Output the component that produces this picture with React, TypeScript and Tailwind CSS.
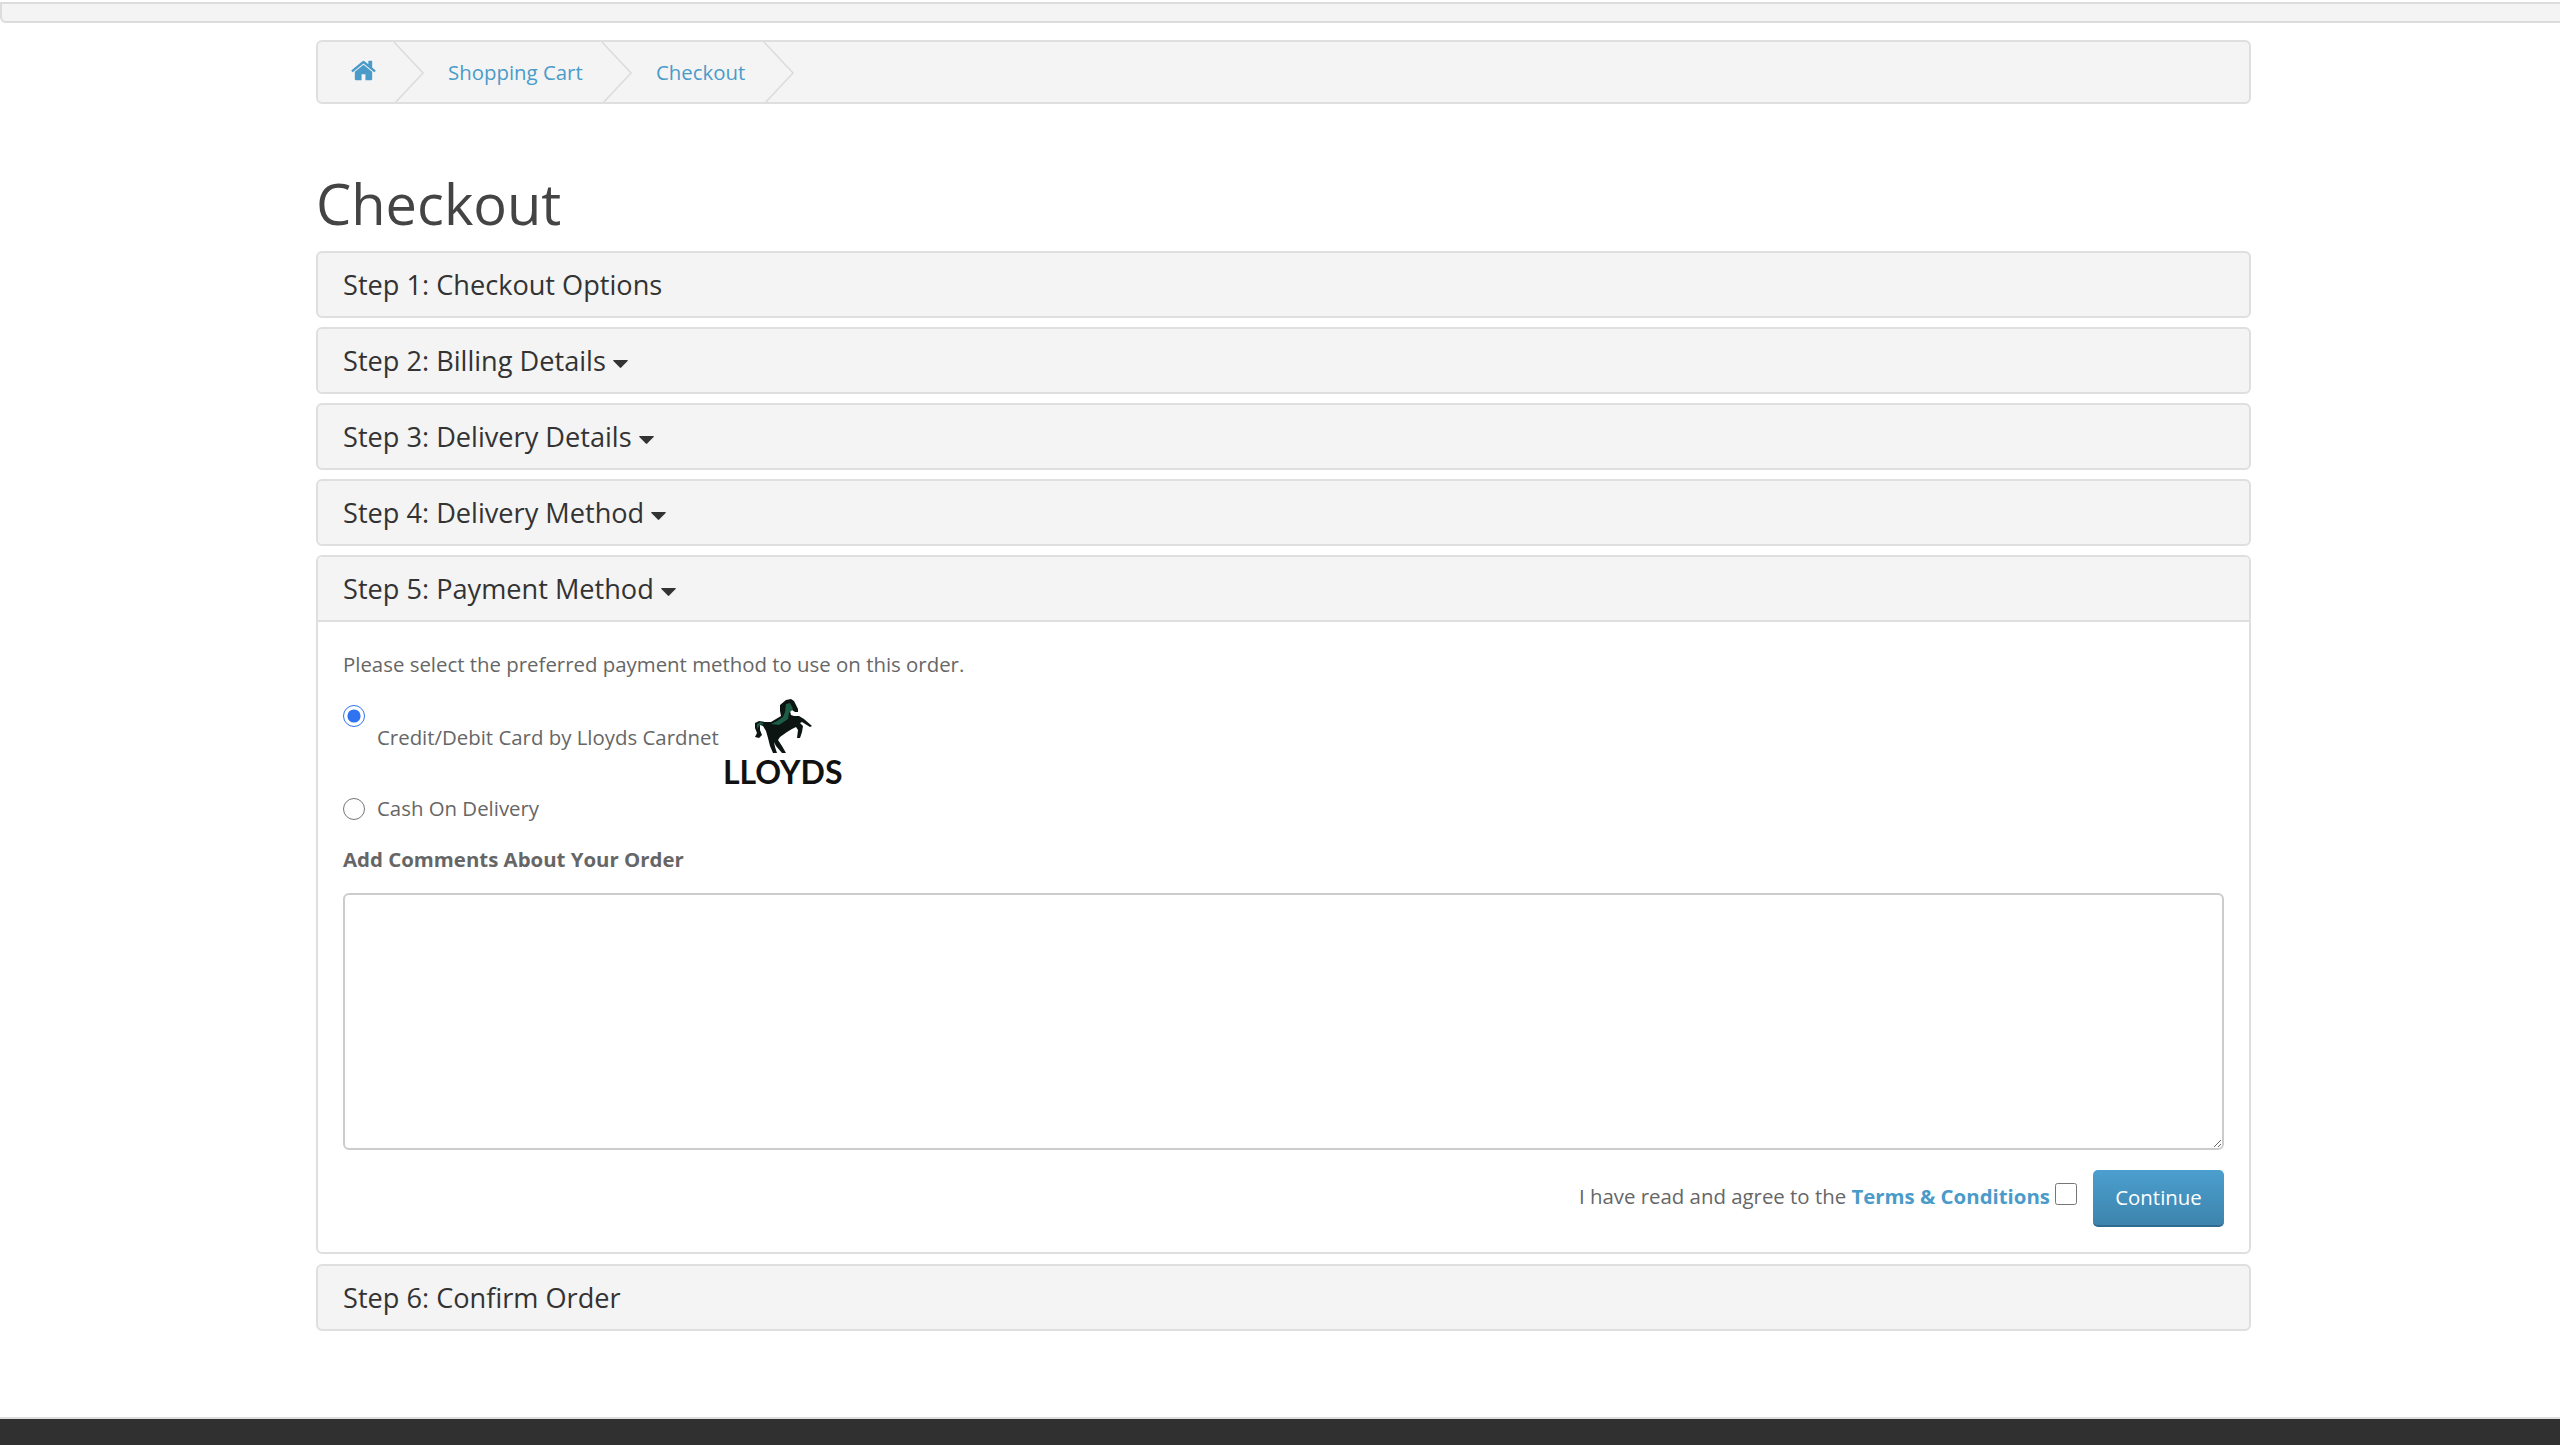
import React from "react";

function Chevron() {
  return (
    <svg width="32" height="62" viewBox="0 0 32 62" className="absolute right-[-30px] top-0" fill="none">
      <path d="M1 0 L30 31 L1 62" stroke="#dcdcdc" strokeWidth="1.6" />
    </svg>
  );
}

function Crumb({ w, children }: { w: string; children: React.ReactNode }) {
  return (
    <div className={`relative h-full flex items-center ${w}`}>
      {children}
      <Chevron />
    </div>
  );
}

function HomeIcon() {
  return (
    <svg width="27" height="27" viewBox="0 0 1792 1792" fill="#4a9bc9" className="mt-[-3px] ml-[-1px] shrink-0">
      <path d="M1472 992v480q0 26-19 45t-45 19h-384v-384h-256v384h-384q-26 0-45-19t-19-45v-480q0-1 .5-3t.5-3l575-474 575 474q1 2 1 6zm223-69l-62 74q-8 9-21 11h-3q-13 0-21-7l-692-577-692 577q-12 8-24 7-13-2-21-11l-62-74q-8-10-7-23.5t11-21.5l719-599q32-26 76-26t76 26l244 204v-195q0-14 9-23t23-9h192q14 0 23 9t9 23v408l219 182q10 8 11 21.5t-7 23.5z" />
    </svg>
  );
}

function Caret() {
  return (
    <svg width="15" height="8" viewBox="0 0 15 8" className="ml-[7px] mt-[5px] shrink-0" fill="#333">
      <path d="M0.5 0 H14.5 Q15 0.5 14.6 1 L8.2 7.6 Q7.5 8.2 6.8 7.6 L0.4 1 Q0 0.5 0.5 0 Z" />
    </svg>
  );
}

function Panel({ title, caret = false }: { title: string; caret?: boolean }) {
  return (
    <div className="h-[67px] mb-[9px] rounded-[6px] border-2 border-[#dfdfdf] bg-[#f4f4f4] pl-[25px] pt-[1px] flex items-center text-[27.15px] text-[#333]">
      <span>{title}</span>
      {caret && <Caret />}
    </div>
  );
}

function Logo() {
  return (
    <div className="w-[122px] ml-[3px] flex flex-col items-center">
      <svg width="68" height="60" viewBox="0 0 68 60" className="mt-[-3px] mb-[2px]">
        <path
          fill="#0d1512"
          d="M31 9 L37 4 L42 3 L45 5 L47 9 L49 13 L49 16 L46 16 L43 14 L41 15 L42 19 L45 20 L50 20 L55 23 L63 30 L61 31 L53 26 L51 27 L54 30 L53 36 L51 42 L48 42 L49 34 L47 31 L43 33 L38 36 L31 41 L29 44 L33 50 L37 57 L33 57 L27 50 L25 46 L26 51 L28 57 L24 57 L21 50 L19 42 L17 35 L14 30 L11 29 L11 34 L13 39 L10 42 L6 41 L8 37 L6 32 L6 27 L10 25 L16 26 L22 26 L27 23 L32 20 L31 15 Z"
        />
        <path fill="#1d5c45" d="M37 8 L41 7 L44 13 L40 17 L39 23 L30 29 L22 28 L28 25 L34 21 L36 16 Z M8 28 L12 26 L15 28 L11 29 L8 33 Z" />
      </svg>
      <span className="font-['Lato','Open_Sans',sans-serif] font-bold text-[32px] leading-[28px] text-[#111]">LLOYDS</span>
    </div>
  );
}

export default function App() {
  return (
    <div className="min-h-screen bg-white font-['Open_Sans',sans-serif] text-[20.4px] text-[#666] flex flex-col">
      <div className="mt-[2px] h-[21px] bg-[#f4f4f4] border-b-2 border-t-2 border-l-2 border-[#dcdcdc] rounded-bl-[6px] w-full" />
      <div className="ml-[316px] w-[1935px] flex-1">
        <div className="mt-[17px] h-[64px] rounded-[6px] border-2 border-[#dfdfdf] bg-[#f4f4f4] pl-[33px] flex items-center text-[#4a9bc9] overflow-hidden">
          <Crumb w="w-[44px]"><HomeIcon /></Crumb>
          <Crumb w="w-[208px] pl-[53px]"><span>Shopping Cart</span></Crumb>
          <Crumb w="w-[162px] pl-[53px]"><span>Checkout</span></Crumb>
        </div>
        <h1 className="mt-[61px] mb-[9px] text-[56px] leading-[77px] font-normal text-[#444]">Checkout</h1>
        <Panel title="Step 1: Checkout Options" />
        <Panel title="Step 2: Billing Details" caret />
        <Panel title="Step 3: Delivery Details" caret />
        <Panel title="Step 4: Delivery Method" caret />
        <div className="h-[699px] mb-[10px] rounded-[6px] border-2 border-[#dfdfdf] flex flex-col">
          <div className="h-[65px] shrink-0 bg-[#f4f4f4] border-b-2 border-[#dfdfdf] rounded-t-[4px] pl-[25px] pt-[1px] flex items-center text-[27.15px] text-[#333]">
            <span>Step 5: Payment Method</span>
            <Caret />
          </div>
          <div className="px-[25px] flex-1 flex flex-col">
            <p className="mt-[29px] leading-[27px]">Please select the preferred payment method to use on this order.</p>
            <div className="mt-[21px] flex h-[96px]">
              <input type="radio" name="pay" defaultChecked className="w-[22px] h-[22px] m-0 mt-[6px] accent-[#2f73f0] shrink-0" />
              <span className="ml-[12px] mt-[25px] leading-[27px]">Credit/Debit Card by Lloyds Cardnet</span>
              <Logo />
            </div>
            <div className="flex items-center h-[27px]">
              <input type="radio" name="pay" className="w-[22px] h-[22px] m-0 shrink-0" />
              <span className="ml-[12px]">Cash On Delivery</span>
            </div>
            <div className="mt-[24px] font-bold leading-[27px]">Add Comments About Your Order</div>
            <textarea className="mt-[20px] w-full h-[257px] rounded-[6px] border-2 border-[#ccc] bg-white block shrink-0" />
            <div className="mt-[20px] flex justify-end items-start">
              <span className="mt-[13px] leading-[27px]">
                I have read and agree to the <a className="font-bold text-[#4a9bc9]">Terms &amp; Conditions</a>
              </span>
              <input type="checkbox" className="w-[22px] h-[22px] m-0 ml-[5px] mt-[13px] shrink-0" />
              <button className="ml-[16px] w-[131px] h-[57px] rounded-[5px] bg-gradient-to-b from-[#4b9fce] to-[#3d84ae] border-b-2 border-[#2f6a8f] text-white">Continue</button>
            </div>
          </div>
        </div>
        <Panel title="Step 6: Confirm Order" />
      </div>
      <div className="h-[28px] shrink-0 bg-[#303030] border-t-2 border-[#ddd]" />
    </div>
  );
}
